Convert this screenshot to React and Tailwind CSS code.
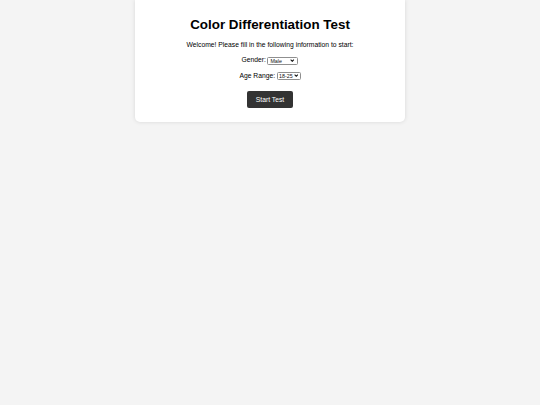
import React from "react";

function Chevron() {
  return (
    <svg width="4.5" height="3.2" viewBox="0 0 8 6" className="shrink-0">
      <path d="M1 1.2 L4 4.4 L7 1.2" fill="none" stroke="#111" strokeWidth="1.9" />
    </svg>
  );
}

export default function App() {
  return (
    <div className="min-h-[405px] w-full bg-[#f4f4f4] font-['Liberation_Sans',Arial,sans-serif] text-black">
      <div className="mx-auto w-[270px] rounded-b-[5px] bg-white px-[8.33px] pt-[8.33px] pb-[7.5px] text-center shadow-[0_0_4px_rgba(0,0,0,0.12)]">
        <h1 className="my-[8.9px] text-[13.4px] leading-[15.3px] font-bold">Color Differentiation Test</h1>
        <p className="my-[6.67px] text-[6.75px] leading-[7.7px]">Welcome! Please fill in the following information to start:</p>
        <div className="mt-[7.2px] mb-[6.8px] flex items-center justify-center text-[6.75px] leading-[8.6px]">
          <span>Gender:</span>
          <div className="ml-[1.5px] flex h-[8px] w-[31px] items-center justify-between rounded-[1.5px] border border-[#8f8f8f] bg-white pl-[2px] pr-[2.5px] text-[5.3px] leading-[6px] text-[#111]">
            <span>Male</span>
            <Chevron />
          </div>
        </div>
        <div className="my-[6.67px] flex items-center justify-center text-[6.75px] leading-[8.6px]">
          <span>Age Range:</span>
          <div className="ml-[1.5px] flex h-[8px] w-[24px] items-center justify-between rounded-[1.5px] border border-[#8f8f8f] bg-white pl-[1.5px] pr-[1.5px] text-[5.3px] leading-[6px] text-[#111]">
            <span>18-25</span>
            <Chevron />
          </div>
        </div>
        <div className="mt-[11px] mb-[6.67px] flex justify-center">
          <button className="h-[16.5px] rounded-[2px] bg-[#333333] px-[8.33px] text-[6.75px] leading-[7.7px] text-white">
            Start Test
          </button>
        </div>
      </div>
    </div>
  );
}
